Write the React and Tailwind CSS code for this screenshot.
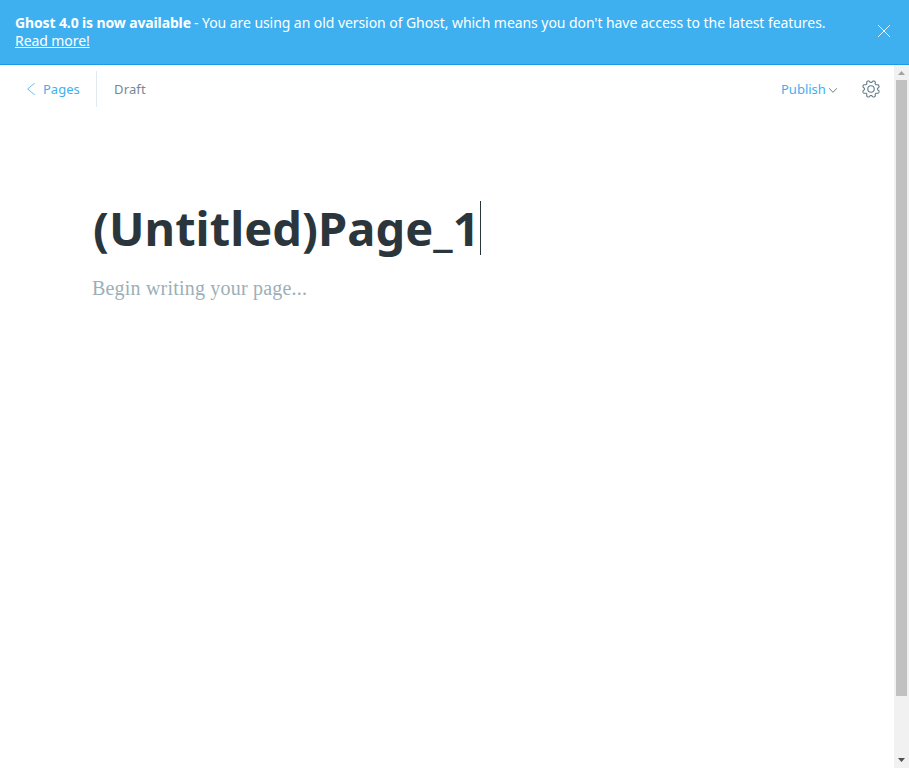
const TOOTH_COUNT = 8;

// Rounded gear outline: flattened teeth, with a notch at each compass point.
function gearOutline() {
  const points = [];
  for (let i = 0; i < 160; i += 1) {
    const angle = (i / 160) * Math.PI * 2;
    const wave = -Math.cos(TOOTH_COUNT * angle);
    const radius = 9.9 + 1.5 * Math.tanh(1.6 * wave + 0.3);
    points.push(`${(12 + radius * Math.sin(angle)).toFixed(2)} ${(12 - radius * Math.cos(angle)).toFixed(2)}`);
  }
  return `M${points.join("L")}Z`;
}

function UpgradeBanner() {
  return (
    <aside className="flex h-[65px] shrink-0 items-center justify-between border-b border-[#1a9be8] bg-[#3eb0ef] pl-[15px] pr-[19px] text-[14px] leading-[18px] text-white">
      <div className="-mt-px whitespace-nowrap">
        <p>
          <b className="inline-block w-[176px] font-bold tracking-[-0.13px]">Ghost 4.0 is now available</b>
          <span className="ml-[3px] tracking-[-0.065px]">- You are using an old version of Ghost, which means you don't have access to the latest features.</span>
        </p>
        <a className="tracking-[-0.08px] underline underline-offset-1">Read more!</a>
      </div>
      <svg className="mt-[-2px] size-3" viewBox="0 0 12 12" fill="none" stroke="currentColor" strokeWidth="0.9" strokeLinecap="round">
        <path d="M0 0l12 12M12 0L0 12" />
      </svg>
    </aside>
  );
}

function GearIcon() {
  return (
    <svg className="size-[18px]" viewBox="0 0 24 24" fill="none" stroke="#647d89" strokeWidth="1.5" strokeLinejoin="round">
      <circle cx="12" cy="12" r="4.3" />
      <path d={gearOutline()} />
    </svg>
  );
}

function EditorHeader() {
  return (
    <header className="flex h-[48px] shrink-0 items-center justify-between pl-[27px] pr-[14px] text-[13px] leading-[18px]">
      <div className="flex items-center">
        <a className="flex items-center text-[#3eb0ef]">
          <svg className="mr-[8px] h-3 w-2" viewBox="0 0 8 12" fill="none" stroke="currentColor" strokeWidth="0.8" strokeLinecap="round" strokeLinejoin="round">
            <path d="M7.5 .3L.6 6l6.9 5.7" />
          </svg>
          <span className="w-[53px]">Pages</span>
        </a>
        <div className="h-9 border-l border-[#dfe9ef] pl-[17px] leading-9 tracking-[0.15px] text-[#738a94]">Draft</div>
      </div>
      <div className="flex items-center">
        <button className="flex items-center text-[#3eb0ef]">
          <span className="w-[48px] text-left">Publish</span>
          <svg className="mt-[2px] h-[5px] w-[8px]" viewBox="0 0 8 5" fill="none" stroke="#5c7380" strokeWidth="0.9" strokeLinecap="round" strokeLinejoin="round">
            <path d="M.4 .5L4 4.4 7.6 .5" />
          </svg>
        </button>
        <button className="ml-[25px]"><GearIcon /></button>
      </div>
    </header>
  );
}

function Scrollbar() {
  return (
    <div className="flex w-[15px] flex-col items-center bg-[#f1f1f1]">
      <svg className="h-[15px] w-[15px]" viewBox="0 0 15 15" fill="#a3a3a3">
        <path d="M4 10h7L7.5 6z" />
      </svg>
      <div className="h-[616px] w-[11px] bg-[#c1c1c1]" />
      <svg className="mt-auto h-[15px] w-[15px]" viewBox="0 0 15 15" fill="#505050">
        <path d="M4 5h7L7.5 9z" />
      </svg>
    </div>
  );
}

export default function App() {
  return (
    <div className="flex h-[768px] w-[909px] flex-col overflow-hidden bg-white font-['Noto_Sans',sans-serif]">
      <UpgradeBanner />
      <div className="flex min-h-0 flex-1">
        <div className="flex min-w-0 flex-1 flex-col">
          <EditorHeader />
          <main className="pl-[92px] pt-[88px]">
            <div className="flex h-[54px] items-center">
              <h1 className="w-[388px] whitespace-nowrap pl-px text-[47px] font-bold leading-[54px] tracking-[0.05px] text-[#2b363c]">(Untitled)Page_1</h1>
              <div className="h-[54px] w-px bg-[#2b363c]" />
            </div>
            <p className="mt-[18px] font-['Liberation_Serif',serif] text-[20px] leading-[30px] tracking-[0.2px] text-[#9bafb8]">Begin writing your page...</p>
          </main>
        </div>
        <Scrollbar />
      </div>
    </div>
  );
}
